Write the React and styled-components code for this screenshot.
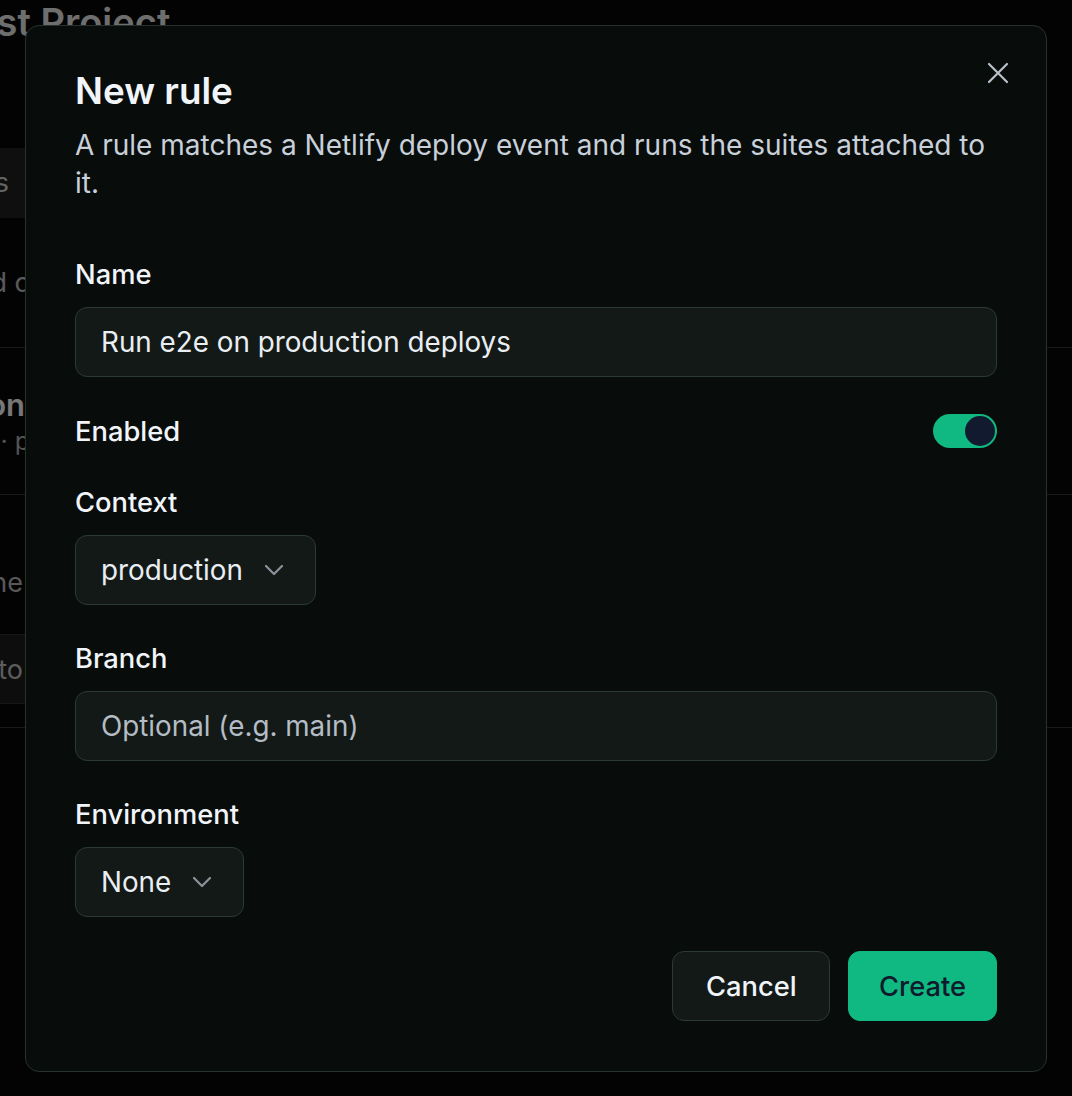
import React, { useState } from "react";
import styled, { createGlobalStyle } from "styled-components";

const GlobalStyle = createGlobalStyle`
  * { box-sizing: border-box; }
  html, body {
    margin: 0;
    background: #070707;
  }
  body {
    font-family: Inter, "Noto Sans", sans-serif;
    -webkit-font-smoothing: antialiased;
    overflow: hidden;
  }
`;

/* ---- page behind the dialog ---- */

const Page = styled.div`
  min-height: 1096px;
  background: #070707;
  color: #c4c4c4;
  display: flex;
  flex-direction: column;
`;

const PageTitle = styled.h1`
  margin: 0 0 0 -48px;
  font-size: 38px;
  line-height: 44px;
  font-weight: 600;
  color: #dcdcdc;
  white-space: nowrap;
`;

const TabBar = styled.div`
  margin-top: 104px;
  height: 70px;
  width: 420px;
  background: #1f1f1f;
  display: flex;
  align-items: center;
`;

const Section = styled.div`
  border-bottom: 1px solid #343434;
  display: flex;
  flex-direction: column;
  justify-content: ${(p) => p.$justify || "center"};
  height: ${(p) => p.$h}px;
`;

const Peek = styled.div`
  width: ${(p) => p.$w}px;
  margin-top: ${(p) => p.$mt || 0}px;
  overflow: hidden;
  display: flex;
  justify-content: flex-end;
  white-space: nowrap;
  font-size: ${(p) => p.$size || 27}px;
  font-weight: ${(p) => p.$weight || 400};
  color: ${(p) => p.$color || "#bdbdbd"};
  line-height: 1.3;
`;

const Box = styled.div`
  margin-top: 34px;
  height: 70px;
  width: 420px;
  background: #1b1b1b;
  border-top: 1px solid #2e2e2e;
  border-bottom: 1px solid #2e2e2e;
  display: flex;
  align-items: center;
`;

/* ---- dialog ---- */

const Overlay = styled.div`
  position: fixed;
  inset: 0;
  background: rgba(0, 0, 0, 0.5);
  padding: 25px;
  display: flex;
  justify-content: center;
  align-items: flex-start;
`;

const Dialog = styled.div`
  position: relative;
  width: 1022px;
  background: #080c0b;
  border: 1px solid #27322d;
  border-radius: 14px;
  padding: 47px 49px 50px;
  color: #f1f5f9;
`;

const CloseButton = styled.button`
  position: absolute;
  top: 29px;
  right: 30px;
  width: 36px;
  height: 36px;
  border: none;
  background: transparent;
  padding: 0;
  display: flex;
  align-items: center;
  justify-content: center;
  color: #b9c1ca;
  cursor: pointer;
`;

const Title = styled.h2`
  margin: 0;
  font-size: 36.8px;
  line-height: 36px;
  font-weight: 600;
  color: #f1f5f9;
`;

const Description = styled.p`
  margin: 17px 0 0;
  font-size: 28px;
  line-height: 38px;
  color: #c8d0da;
`;

const Form = styled.div`
  margin-top: 55px;
  display: flex;
  flex-direction: column;
  gap: 36px;
`;

const Field = styled.div`
  display: flex;
  flex-direction: column;
  align-items: flex-start;
  gap: 15px;
`;

const Label = styled.label`
  font-size: 27.3px;
  line-height: 35px;
  font-weight: 500;
  color: #f1f5f9;
`;

const TextInput = styled.input`
  width: 100%;
  height: 70px;
  padding: 0 25px;
  background: #131916;
  border: 1px solid #2c3a33;
  border-radius: 12px;
  font-family: inherit;
  font-size: 27.8px;
  color: #e9eef3;
  outline: none;

  &::placeholder {
    color: #b4bcc5;
  }
`;

const ToggleRow = styled.div`
  height: 36px;
  display: flex;
  align-items: center;
  justify-content: space-between;
`;

const Track = styled.button`
  position: relative;
  width: 64px;
  height: 34px;
  border: none;
  padding: 0;
  border-radius: 17px;
  background: ${(p) => (p.$on ? "#10b981" : "#2c3a33")};
  cursor: pointer;
`;

const Knob = styled.span`
  position: absolute;
  top: 2px;
  left: ${(p) => (p.$on ? "32px" : "2px")};
  width: 30px;
  height: 30px;
  border-radius: 50%;
  background: #111a2e;
`;

const SelectButton = styled.button`
  height: 70px;
  padding: 0 30px 0 25px;
  display: inline-flex;
  align-items: center;
  gap: 20px;
  background: #131916;
  border: 1px solid #2c3a33;
  border-radius: 12px;
  font-family: inherit;
  font-size: 27.8px;
  color: #e9eef3;
  cursor: pointer;
`;

const Footer = styled.div`
  margin-top: -2px;
  display: flex;
  justify-content: flex-end;
  gap: 18px;
`;

const Button = styled.button`
  height: 70px;
  padding: 0 ${(p) => (p.$primary ? 30 : 32.5)}px;
  border-radius: 12px;
  border: 1px solid ${(p) => (p.$primary ? "#10b981" : "#2c3a33")};
  background: ${(p) => (p.$primary ? "#10b981" : "#131916")};
  color: ${(p) => (p.$primary ? "#0f1a2c" : "#f1f5f9")};
  font-family: inherit;
  font-size: 27.3px;
  font-weight: 500;
  cursor: pointer;
`;

const Chevron = () => (
  <svg width="22" height="12" viewBox="0 0 22 12" fill="none">
    <path d="M3 2l8 8 8-8" stroke="#8b939c" strokeWidth="2.2" strokeLinecap="round" strokeLinejoin="round" />
  </svg>
);

const CloseIcon = () => (
  <svg width="22" height="22" viewBox="0 0 22 22" fill="none">
    <path d="M2 2l18 18M20 2L2 20" stroke="currentColor" strokeWidth="2.2" strokeLinecap="round" />
  </svg>
);

const App = () => {
  const [enabled, setEnabled] = useState(true);
  const [name, setName] = useState("Run e2e on production deploys");
  const [branch, setBranch] = useState("");

  return (
    <>
      <GlobalStyle />
      <Page>
        <PageTitle>Test Project</PageTitle>
        <TabBar>
          <Peek $w={9} $color="#c8c8c8">Rules</Peek>
        </TabBar>
        <Section $h={130}>
          <Peek $w={30} $color="#b4b4b4">Deploy rules matched c</Peek>
        </Section>
        <Section $h={147}>
          <Peek $w={25} $size={31} $weight={600} $color="#eeeeee">Production</Peek>
          <Peek $w={30} $size={25} $color="#a8a8a8">main · p</Peek>
        </Section>
        <Section $h={233} $justify="flex-start">
          <Peek $w={23} $mt={70} $color="#b0b0b0">Runs when the</Peek>
          <Box>
            <Peek $w={23} $color="#b8b8b8">Add to</Peek>
          </Box>
        </Section>
      </Page>

      <Overlay>
        <Dialog role="dialog">
          <CloseButton aria-label="Close">
            <CloseIcon />
          </CloseButton>
          <Title>New rule</Title>
          <Description>
            A rule matches a Netlify deploy event and runs the suites attached to it.
          </Description>

          <Form>
            <Field>
              <Label>Name</Label>
              <TextInput value={name} onChange={(e) => setName(e.target.value)} />
            </Field>

            <ToggleRow>
              <Label>Enabled</Label>
              <Track $on={enabled} onClick={() => setEnabled(!enabled)}>
                <Knob $on={enabled} />
              </Track>
            </ToggleRow>

            <Field>
              <Label>Context</Label>
              <SelectButton>
                production
                <Chevron />
              </SelectButton>
            </Field>

            <Field>
              <Label>Branch</Label>
              <TextInput
                placeholder="Optional (e.g. main)"
                value={branch}
                onChange={(e) => setBranch(e.target.value)}
              />
            </Field>

            <Field>
              <Label>Environment</Label>
              <SelectButton>
                None
                <Chevron />
              </SelectButton>
            </Field>

            <Footer>
              <Button>Cancel</Button>
              <Button $primary>Create</Button>
            </Footer>
          </Form>
        </Dialog>
      </Overlay>
    </>
  );
};

export default App;
